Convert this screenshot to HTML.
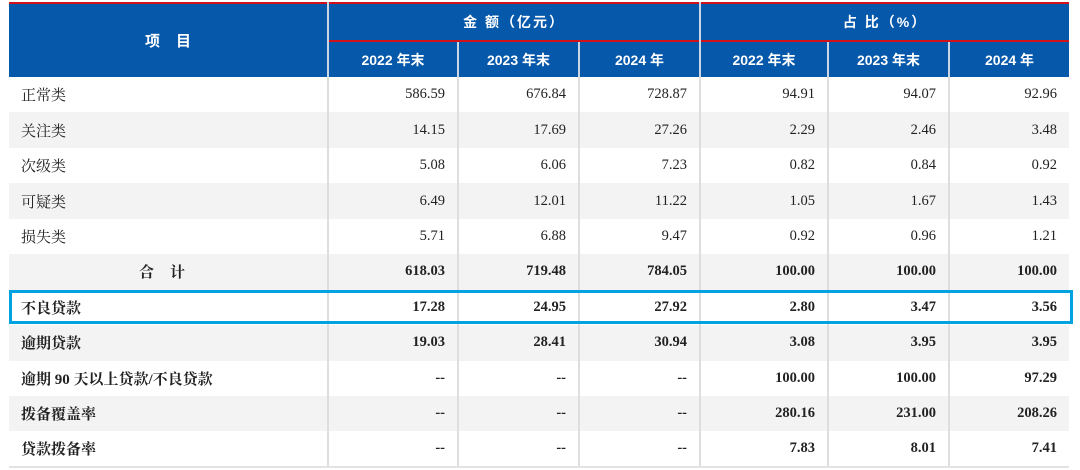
<!DOCTYPE html>
<html><head><meta charset="utf-8"><style>
body{margin:0;background:#fff;width:1080px;height:470px;overflow:hidden;position:relative}
table{position:absolute;left:9px;top:2px;border-collapse:collapse;table-layout:fixed;width:1060px;border-top:2px solid #d0121b}
td,th{padding:0;box-sizing:border-box}
th{background:#0558aa;color:#fff;font-family:"Liberation Sans","Noto Sans CJK SC",sans-serif;font-weight:bold;font-size:14px;border-left:2px solid #c9d6e6}
th.first{border-left:none;letter-spacing:16px;padding-left:16px;font-size:15px}
tr.h1 th{height:38px}
tr.h2 th{height:36px;border-top:2px solid #d0121b}
td{height:35.45px;font-family:"Liberation Serif","Noto Serif CJK SC",serif;font-size:14.5px;color:#222;text-align:right;padding-right:12px;border-left:2px solid #dedede}
td:first-child{text-align:left;padding-left:12px;border-left:none;font-family:"Liberation Serif","Noto Serif CJK SC",serif;font-size:15px}
tr.g td{background:#f3f3f3}
tr.b td{font-weight:bold}
tr.last td{border-bottom:2px solid #e3e3e3}
.box{position:absolute;left:9px;top:290px;width:1064px;height:34px;border:3px solid #00a3e0;box-sizing:border-box}
</style></head><body>
<table>
<colgroup><col style="width:319px"><col style="width:130px"><col style="width:121px"><col style="width:121px"><col style="width:128px"><col style="width:121px"><col style="width:120px"></colgroup>
<tr class="h1"><th rowspan="2" class="first">项目</th><th colspan="3" style="letter-spacing:2px">金 额（亿元）</th><th colspan="3" style="letter-spacing:2px">占 比（%）</th></tr>
<tr class="h2"><th>2022 年末</th><th>2023 年末</th><th>2024 年</th><th>2022 年末</th><th>2023 年末</th><th>2024 年</th></tr>
<tr><td>正常类</td><td>586.59</td><td>676.84</td><td>728.87</td><td>94.91</td><td>94.07</td><td>92.96</td></tr>
<tr class="g"><td>关注类</td><td>14.15</td><td>17.69</td><td>27.26</td><td>2.29</td><td>2.46</td><td>3.48</td></tr>
<tr><td>次级类</td><td>5.08</td><td>6.06</td><td>7.23</td><td>0.82</td><td>0.84</td><td>0.92</td></tr>
<tr class="g"><td>可疑类</td><td>6.49</td><td>12.01</td><td>11.22</td><td>1.05</td><td>1.67</td><td>1.43</td></tr>
<tr><td>损失类</td><td>5.71</td><td>6.88</td><td>9.47</td><td>0.92</td><td>0.96</td><td>1.21</td></tr>
<tr class="g b"><td style="text-align:center;letter-spacing:16px;padding-left:16px">合计</td><td>618.03</td><td>719.48</td><td>784.05</td><td>100.00</td><td>100.00</td><td>100.00</td></tr>
<tr class="b"><td>不良贷款</td><td>17.28</td><td>24.95</td><td>27.92</td><td>2.80</td><td>3.47</td><td>3.56</td></tr>
<tr class="g b"><td>逾期贷款</td><td>19.03</td><td>28.41</td><td>30.94</td><td>3.08</td><td>3.95</td><td>3.95</td></tr>
<tr class="b"><td>逾期 90 天以上贷款/不良贷款</td><td>--</td><td>--</td><td>--</td><td>100.00</td><td>100.00</td><td>97.29</td></tr>
<tr class="g b"><td>拨备覆盖率</td><td>--</td><td>--</td><td>--</td><td>280.16</td><td>231.00</td><td>208.26</td></tr>
<tr class="b last"><td>贷款拨备率</td><td>--</td><td>--</td><td>--</td><td>7.83</td><td>8.01</td><td>7.41</td></tr>
</table>
<div class="box"></div>
</body></html>
